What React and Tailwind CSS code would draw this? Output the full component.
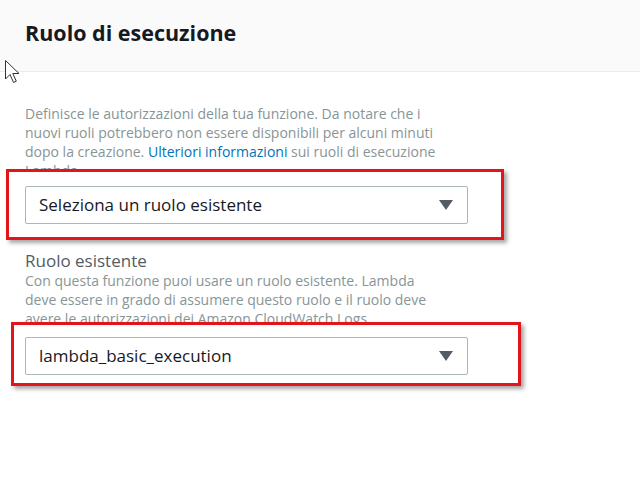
import React from 'react'

const font = { fontFamily: '"Open Sans", "Noto Sans", sans-serif' }

function Caret() {
  return (
    <svg width="14" height="10" viewBox="0 0 14 10" className="shrink-0">
      <path d="M0 0 H14 L7 10 Z" fill="#545b64" />
    </svg>
  )
}

function Select({ value }) {
  return (
    <div className="flex items-center justify-between w-[443px] h-[38px] pl-[13px] pr-[14px] bg-white border border-[#aab7b8] rounded-[2px] text-[17px] text-[#16191f]">
      <span>{value}</span>
      <Caret />
    </div>
  )
}

function Cursor() {
  return (
    <svg width="18" height="26" viewBox="0 0 18 26" className="absolute left-[4px] top-[59px]">
      <path d="M1.5 1.5 L1.5 20 L6 15.5 L9.5 23.5 L12.3 22.2 L8.8 14.5 L15 14.5 Z" fill="#fff" stroke="#333" strokeWidth="1" strokeLinejoin="round" />
    </svg>
  )
}

export default function App() {
  return (
    <div className="relative w-[640px] h-[477px] bg-white overflow-hidden" style={font}>
      {/* header */}
      <div className="h-[72px] bg-[#fafafa] border-b border-[#eaeded] pl-[25px] pt-[18px]">
        <h2 className="text-[21.5px] leading-[30px] font-bold text-[#16191f]">Ruolo di esecuzione</h2>
      </div>
      <Cursor />

      <div className="pl-[25px] pt-[32px]">
        <p className="text-[14px] leading-[19px] text-[#879596]">
          Definisce le autorizzazioni della tua funzione. Da notare che i<br />
          nuovi ruoli potrebbero non essere disponibili per alcuni minuti<br />
          dopo la creazione. <span className="text-[#0073bb]">Ulteriori informazioni</span> sui ruoli di esecuzione<br />
          Lambda.
        </p>

        <div className="relative w-[498px] ml-[-19px] mt-[-11px] pt-[14px] pl-[16px] pb-[13px] bg-white border-[3px] border-[#e4141b] shadow-[3px_3px_4px_rgba(0,0,0,0.35)]">
          <Select value="Seleziona un ruolo esistente" />
        </div>

        <div className="mt-[11px] text-[17px] leading-[20px] text-[#545b64]">Ruolo esistente</div>
        <p className="text-[14px] leading-[19px] text-[#879596]">
          Con questa funzione puoi usare un ruolo esistente. Lambda<br />
          deve essere in grado di assumere questo ruolo e il ruolo deve<br />
          avere le autorizzazioni dei Amazon CloudWatch Logs.
        </p>

        <div className="relative w-[510px] ml-[-14px] mt-[-6px] pt-[12px] pl-[11px] pb-[8px] bg-white border-[3px] border-[#e4141b] shadow-[3px_3px_4px_rgba(0,0,0,0.35)]">
          <Select value="lambda_basic_execution" />
        </div>
      </div>
    </div>
  )
}
